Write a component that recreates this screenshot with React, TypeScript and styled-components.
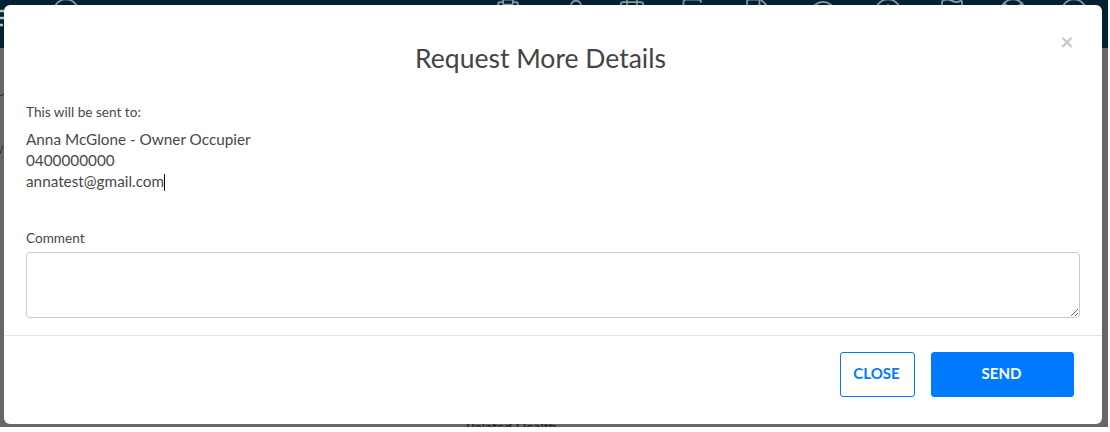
import React from 'react';
import styled, { createGlobalStyle } from 'styled-components';
import { Clipboard, User, Calendar, Copy, FileText, Gauge, CircleDollarSign, Flag, LifeBuoy, CircleHelp, CircleUser } from 'lucide-react';

const GlobalStyle = createGlobalStyle`
  html, body {
    margin: 0;
    padding: 0;
    background: #ffffff;
  }

  body {
    font-family: Lato, "Open Sans", sans-serif;
    color: #333333;
  }
`;

const Stage = styled.div`
  position: relative;
  width: 1108px;
  height: 427px;
  overflow: hidden;
  background-color: #666666;
`;

const TopBar = styled.div`
  height: 48px;
  background-color: #012230;
  overflow: hidden;
  display: flex;
  align-items: flex-start;
`;

const LogoMark = styled.svg`
  flex: none;
  margin-top: 8px;
`;

const NavIcon = styled.span<{ gap: number }>`
  display: block;
  flex: none;
  width: 30px;
  height: 30px;
  margin-top: -3px;
  margin-left: ${(props) => props.gap}px;
  color: #8c989e;
`;

const Backdrop = styled.div`
  position: relative;
  height: 379px;
  box-sizing: border-box;
  padding: 370px 0 0 466px;
  font-size: 14px;
  line-height: 18px;
  color: #1c1c1c;
`;

const EdgeMark = styled.svg<{ top: number }>`
  position: absolute;
  left: 0;
  top: ${(props) => props.top}px;
`;

const Modal = styled.div`
  position: absolute;
  top: 5px;
  left: 4px;
  width: 1098px;
  height: 419px;
  background-color: #ffffff;
  border-radius: 6px;
  display: flex;
  flex-direction: column;
`;

const Header = styled.div`
  height: 72px;
  padding: 32px 25px 0 0;
  box-sizing: border-box;
`;

const Title = styled.h4`
  margin: 0;
  text-align: center;
  font-size: 26.5px;
  line-height: 42px;
  font-weight: 400;
  color: #444444;
`;

const CloseIcon = styled.button`
  position: absolute;
  top: 23px;
  right: 26px;
  width: 18px;
  height: 26px;
  border: 0;
  padding: 0;
  background: transparent;
  color: #c9c9c9;
  font-family: Lato, sans-serif;
  font-size: 23px;
  font-weight: 700;
  line-height: 26px;
  text-align: center;
`;

const Body = styled.div`
  flex: 1;
  padding: 26px 22px 0;
  display: flex;
  flex-direction: column;
`;

const SmallLabel = styled.label`
  display: block;
  font-size: 13.6px;
  line-height: 18px;
  color: #484848;
`;

const Recipient = styled.div`
  margin-top: 8px;
  margin-bottom: 37px;
  font-size: 15.3px;
  line-height: 21px;
  color: #484848;
`;

const Caret = styled.span`
  display: inline-block;
  width: 1px;
  height: 17px;
  vertical-align: -4px;
  background-color: #111111;
`;

const CommentBox = styled.textarea`
  display: block;
  margin-top: 5px;
  width: 1054px;
  height: 66px;
  box-sizing: border-box;
  border: 1px solid #cccccc;
  border-radius: 4px;
  background: #ffffff;
  outline: none;
`;

const Footer = styled.div`
  height: 89px;
  box-sizing: border-box;
  border-top: 1px solid #e5e5e5;
  padding: 16px 28px 0 0;
  display: flex;
  justify-content: flex-end;
  align-items: flex-start;
  gap: 16px;
`;

const Button = styled.button<{ primary?: boolean }>`
  height: 45px;
  width: ${(props) => props.primary ? '143px' : '75px'};
  box-sizing: border-box;
  border: 1px solid #007bff;
  border-radius: 3px;
  background-color: ${(props) => props.primary ? '#007bff' : '#ffffff'};
  color: ${(props) => props.primary ? '#ffffff' : '#007bff'};
  font-family: Lato, sans-serif;
  font-size: 15px;
  font-weight: 700;
  padding: 0 2px 3px 0;
`;

// gap is the space left of each icon, the bar's spacing is not even
const navIcons = [
  { Icon: CircleUser, gap: 45 },
  { Icon: Clipboard, gap: 412 },
  { Icon: User, gap: 38 },
  { Icon: Calendar, gap: 26 },
  { Icon: Copy, gap: 34 },
  { Icon: FileText, gap: 31 },
  { Icon: Gauge, gap: 36 },
  { Icon: CircleDollarSign, gap: 35 },
  { Icon: Flag, gap: 34 },
  { Icon: LifeBuoy, gap: 31 },
  { Icon: CircleHelp, gap: 31 },
];

export default function App() {
  return (
    <>
      <GlobalStyle />
      <Stage>
        <TopBar>
          <LogoMark width="6" height="20" viewBox="0 0 6 20">
            <path d="M0 3h4M0 10h4M0 17h3" stroke="#b8c2c6" strokeWidth="2.5" fill="none" />
          </LogoMark>
          {navIcons.map(({ Icon, gap }, i) => (
            <NavIcon key={i} gap={gap}>
              <Icon size={30} strokeWidth={1.4} />
            </NavIcon>
          ))}
        </TopBar>
        <Backdrop>
          <EdgeMark top={44} width="5" height="6" viewBox="0 0 5 6">
            <path d="M0 4l4-2" stroke="#2a2a2a" strokeWidth="1" fill="none" />
          </EdgeMark>
          <EdgeMark top={96} width="5" height="12" viewBox="0 0 5 12">
            <path d="M0 10l3-9" stroke="#2a2a2a" strokeWidth="1" fill="none" />
          </EdgeMark>
          Related Health
        </Backdrop>
        <Modal>
          <Header>
            <Title>Request More Details</Title>
          </Header>
          <CloseIcon>×</CloseIcon>
          <Body>
            <SmallLabel>This will be sent to:</SmallLabel>
            <Recipient>
              <div>Anna McGlone - Owner Occupier</div>
              <div>0400000000</div>
              <div>annatest@gmail.com<Caret /></div>
            </Recipient>
            <SmallLabel>Comment</SmallLabel>
            <CommentBox />
          </Body>
          <Footer>
            <Button>CLOSE</Button>
            <Button primary>SEND</Button>
          </Footer>
        </Modal>
      </Stage>
    </>
  );
}
